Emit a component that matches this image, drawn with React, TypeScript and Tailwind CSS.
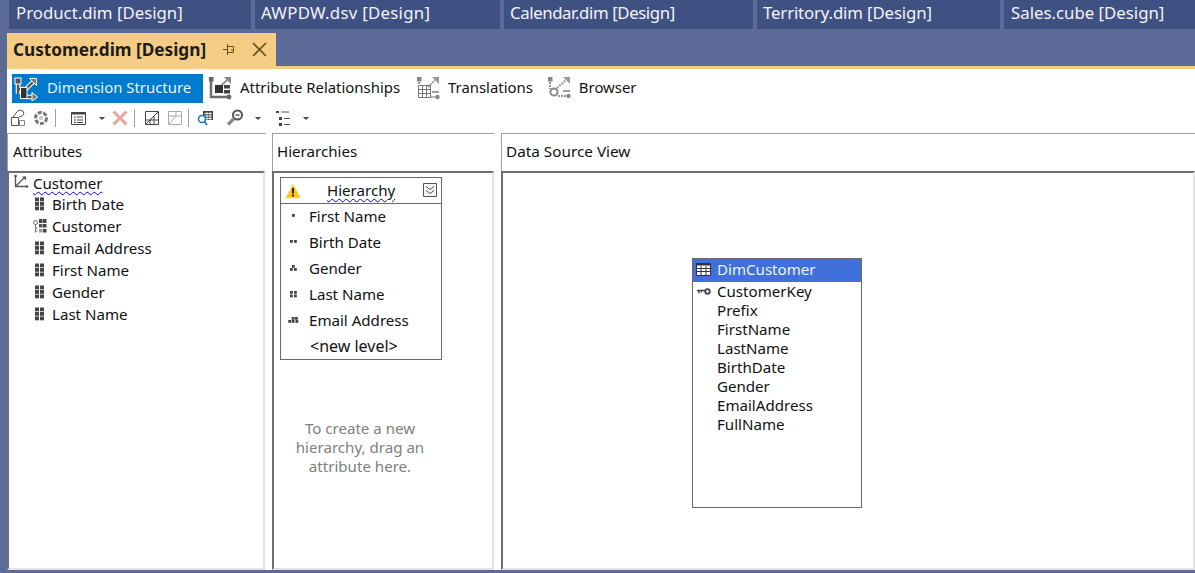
import React from 'react';

const OTHER_TABS = [
  { label: 'Product.dim [Design]', cls: 'w-[242px] pl-[7px]' },
  { label: 'AWPDW.dsv [Design]', cls: 'w-[245px] pl-[6px] tracking-[0.28px]' },
  { label: 'Calendar.dim [Design]', cls: 'w-[249px] pl-[6px] tracking-[-0.4px]' },
  { label: 'Territory.dim [Design]', cls: 'w-[243px] pl-[6px] tracking-[-0.14px]' },
  { label: 'Sales.cube [Design]', cls: 'w-[191px] pl-[7px]' },
];

const ATTRIBUTES = ['Birth Date', 'Customer', 'Email Address', 'First Name', 'Gender', 'Last Name'];
const COLUMNS = ['CustomerKey', 'Prefix', 'FirstName', 'LastName', 'BirthDate', 'Gender', 'EmailAddress', 'FullName'];

// Little square dots that get denser per hierarchy level
const LEVELS: { name: string; dots: [number, number][] }[] = [
  { name: 'First Name', dots: [[4, 3]] },
  { name: 'Birth Date', dots: [[2, 3], [6, 3]] },
  { name: 'Gender', dots: [[4, 2], [2, 5], [6, 5]] },
  { name: 'Last Name', dots: [[2, 2], [6, 2], [2, 5.5], [6, 5.5]] },
  { name: 'Email Address', dots: [[3.7, 2], [7, 2], [0.3, 5], [3.7, 5], [7.5, 5]] },
];

function DimensionIcon({ variant }: { variant: 'structure' | 'relations' | 'translations' | 'browser' }) {
  return (
    <svg width="24" height="24" viewBox="0 0 24 24" className="shrink-0">
      {variant === 'structure' && (
        <g>
          <path d="M4 3v14M4 12h6M11 13 21 3M12 20h10" stroke="#fff" strokeWidth="4.5" fill="none" />
          <path d="M4 3v14M4 12h6M11 13 21 3M12 20h10" stroke="#555" strokeWidth="2.4" fill="none" />
          <rect x="6.5" y="10.5" width="6.5" height="11" fill="#333" stroke="#fff" />
          <rect x="1" y="1" width="6" height="6" fill="#555" stroke="#fff" />
          <path d="M15.5 1.5h7v7z" fill="#777" stroke="#fff" />
          <path d="M18 15.5l5.5 4.5-5.5 4z" fill="#777" stroke="#fff" />
        </g>
      )}
      {variant === 'relations' && (
        <g>
          <path d="M3 3v18h18" stroke="#b0b0b0" strokeWidth="3" fill="none" />
          <path d="M3 3v18h18" stroke="#555" strokeWidth="1.4" fill="none" />
          <path d="M10 13 20 3" stroke="#999" strokeWidth="2.2" />
          <rect x="7" y="9" width="8" height="8" fill="#333" />
          <rect x="16" y="9" width="6" height="3.5" fill="#444" />
          <rect x="16" y="14" width="6" height="3.5" fill="#444" />
          <rect x="1" y="1" width="4.5" height="4.5" fill="#666" />
          <path d="M16 1h7v7z" fill="#888" />
          <circle cx="21" cy="21" r="2.4" fill="#666" />
        </g>
      )}
      {variant === 'translations' && (
        <g>
          <path d="M3 3v6M12 11 20 3" stroke="#999" strokeWidth="2" strokeDasharray="2 1" fill="none" />
          <rect x="1" y="1" width="4.5" height="4.5" fill="#888" />
          <path d="M16 1h7v7z" fill="#999" />
          <path d="M2.5 9.5h12v12h-12zM2.5 13.5h12M2.5 17.5h12M6.5 9.5v12M10.5 9.5v12" stroke="#777" fill="none" />
          <path d="M16 16h7" stroke="#888" strokeWidth="1.6" />
          <path d="M15 21h6" stroke="#aaa" strokeWidth="1.6" />
          <circle cx="21.5" cy="21" r="2.2" fill="#888" />
        </g>
      )}
      {variant === 'browser' && (
        <g>
          <path d="M3 3v10M10 12 20 3M11 20h10" stroke="#999" strokeWidth="2" strokeDasharray="2 1" fill="none" />
          <rect x="1" y="1" width="4.5" height="4.5" fill="#888" />
          <path d="M16 1h7v7z" fill="#999" />
          <circle cx="7" cy="16" r="3.6" fill="#fff" stroke="#888" strokeWidth="2" />
          <path d="M16 15h7" stroke="#888" strokeWidth="1.6" />
          <circle cx="21.5" cy="20" r="2.2" fill="#888" />
        </g>
      )}
    </svg>
  );
}

function AttributeIcon({ keyed }: { keyed: boolean }) {
  if (keyed) {
    return (
      <svg width="14" height="14" viewBox="0 0 14 14" className="shrink-0">
        <circle cx="2.5" cy="3.5" r="2" fill="none" stroke="#666" />
        <path d="M2.5 5.5v8M2.5 9h2M2.5 12h2" stroke="#777" />
        <rect x="6" y="0" width="3.5" height="4" fill="#444" />
        <rect x="10" y="0" width="3.5" height="4" fill="#444" />
        <rect x="6" y="5" width="3.5" height="3.5" fill="#555" />
        <rect x="10" y="5" width="3.5" height="3.5" fill="#444" />
        <rect x="6" y="10" width="3.5" height="3.5" fill="#999" />
        <rect x="10" y="10" width="3.5" height="3.5" fill="#444" />
      </svg>
    );
  }
  return (
    <svg width="14" height="14" viewBox="0 0 14 14" className="shrink-0">
      {[0.5, 5, 9.5].map((y) => (
        <g key={y}>
          <rect x="2" y={y} width="4" height="3.8" fill="#444" />
          <rect x="7" y={y} width="4" height="3.8" fill="#444" />
        </g>
      ))}
    </svg>
  );
}

function Caret({ className }: { className: string }) {
  return <div className={`w-0 h-0 border-x-[3px] border-x-transparent border-t-[3px] border-t-[#444] ${className}`} />;
}

function Separator({ className }: { className: string }) {
  return <div className={`w-px h-[18px] bg-[#a0a0a0] ${className}`} />;
}

function ToolIcons() {
  return (
    <div className="flex items-center h-[22px] pl-[4px]">
      {/* build / process */}
      <svg width="16" height="18" viewBox="0 0 16 18">
        <path d="M.5 8.5h7v8h-7zM2 8l3-4 3-3 4 1 1 3-2 2-3 1" fill="#fff" stroke="#555" />
        <path d="M8.5 11.5h5v5h-5z" fill="#fff" stroke="#888" />
      </svg>
      <svg width="16" height="16" viewBox="0 0 16 16" className="ml-[6px]">
        <circle cx="8" cy="8" r="5.5" fill="none" stroke="#777" strokeWidth="3" strokeDasharray="4 1.5" />
        <circle cx="8" cy="8" r="2.2" fill="#ccc" />
      </svg>
      <Separator className="ml-[6px]" />
      <svg width="15" height="13" viewBox="0 0 15 13" className="ml-[15px]">
        <path d="M.5.5h14v12H.5z" fill="#fff" stroke="#444" />
        <path d="M.5 1.5h14" stroke="#444" strokeWidth="2" />
        <path d="M3 5h2M6 5h6M3 8h2M6 8h6M3 10.5h2M6 10.5h6" stroke="#444" />
      </svg>
      <Caret className="ml-[13px]" />
      <svg width="16" height="16" viewBox="0 0 16 16" className="ml-[7px]">
        <path d="M1.5 1.5l13 13M14.5 1.5l-13 13" stroke="#e3a79e" strokeWidth="3" />
      </svg>
      <Separator className="ml-[6px]" />
      <svg width="14" height="14" viewBox="0 0 14 14" className="ml-[10px]">
        <path d="M.5.5h13v13H.5z" fill="#fff" stroke="#444" />
        <path d="M1 13 13 1M5 13V9M9 13V5M1 9h12M5 9 9 5" stroke="#444" />
      </svg>
      <svg width="14" height="14" viewBox="0 0 14 14" className="ml-[9px]">
        <path d="M.5.5h13v13H.5z" fill="#fff" stroke="#aaa" />
        <path d="M1 5h12M8 1v4M1 13 8 5" stroke="#aaa" />
      </svg>
      <Separator className="ml-[6px]" />
      <svg width="16" height="16" viewBox="0 0 16 16" className="ml-[8px]">
        <path d="M6 1h10v9H6z" fill="#444" />
        <path d="M7 3.5h8M7 6h8M7 8.5h8M10 2v8M13 2v8" stroke="#fff" strokeWidth=".8" />
        <circle cx="5" cy="9" r="3.5" fill="#fff" stroke="#1e79c8" strokeWidth="1.6" />
        <path d="M7.5 11.5 10 15" stroke="#1e79c8" strokeWidth="1.8" />
      </svg>
      <svg width="18" height="18" viewBox="0 0 18 18" className="ml-[13px]">
        <circle cx="11.5" cy="6" r="4.5" fill="#fff" stroke="#555" strokeWidth="2" />
        <path d="M9.5 6h4" stroke="#555" strokeWidth="1.4" />
        <path d="M8 9.5 2 15.5" stroke="#888" strokeWidth="3.4" />
      </svg>
      <Caret className="ml-[11px]" />
      <svg width="15" height="16" viewBox="0 0 15 16" className="ml-[14px]">
        <path d="M1 1h3v2H1zM4 7h3v3H4zM4 13h3v3H4z" fill="#444" />
        <path d="M6 2h8M9 8.5h6M9 14.5h6" stroke="#555" />
      </svg>
      <Caret className="ml-[13px]" />
    </div>
  );
}

function Panel({ title, className, titleClass, children }: { title: string; className: string; titleClass: string; children: React.ReactNode }) {
  return (
    <section className={`flex flex-col ${className}`}>
      <h2 className={`h-[38px] shrink-0 border-t border-l border-[#a0a0a0] pt-[7px] font-normal leading-[20px] ${titleClass}`}>{title}</h2>
      <div className="relative flex-1 min-h-0 border-t-2 border-l-2 border-[#6e6e6e] border-r-2 border-r-[#e3e3e3] border-b-2 border-b-[#e3e3e3] bg-white">
        {children}
      </div>
    </section>
  );
}

export default function App() {
  return (
    <div
      className="w-[1195px] h-[573px] overflow-hidden bg-[#5c6a97] text-[15.1px] text-[#111] flex flex-col"
      style={{ fontFamily: '"Noto Sans", "Open Sans", sans-serif' }}
    >
      {/* Hidden tabs row */}
      <div className="h-[29px] shrink-0 flex pl-[9px] gap-[4px] overflow-hidden">
        {OTHER_TABS.map((tab) => (
          <div key={tab.label} className={`${tab.cls} shrink-0 bg-[#3f5083] text-[#f2f4f8] text-[16.8px] leading-[26px] whitespace-nowrap`}>
            {tab.label}
          </div>
        ))}
      </div>

      {/* Active tab */}
      <div className="h-[33px] shrink-0 mt-[4px] pl-[7px] flex">
        <div className="w-[269px] bg-[#f5cc84] flex items-center pl-[6px] text-[#1c1c1c]">
          <span className="font-bold text-[17.2px] whitespace-nowrap">Customer.dim [Design]</span>
          <svg width="13" height="11" viewBox="0 0 13 11" className="ml-[17px] shrink-0">
            <path d="M0 5.5h5M4.5 2.5h6v6h-6zM4.5 0v11M8 6h2.5" stroke="#6b4e1e" fill="none" />
          </svg>
          <svg width="15" height="15" viewBox="0 0 15 15" className="ml-[16px] shrink-0">
            <path d="M1 1l13 13M14 1 1 14" stroke="#6b4e1e" strokeWidth="1.6" />
          </svg>
        </div>
      </div>

      {/* Designer */}
      <div className="ml-[7px] h-[504px] shrink-0 border-t-[3px] border-[#f5cc84] bg-white flex flex-col">
        <nav className="h-[29px] mt-[5px] shrink-0 flex items-center pl-[5px] whitespace-nowrap text-[14.9px]">
          <div className="w-[191px] h-[29px] bg-[#007acc] text-[#eaf5fc] flex items-center pl-[2px] gap-[9px]">
            <DimensionIcon variant="structure" />
            <span className="pb-[2px]">Dimension Structure</span>
          </div>
          <div className="flex items-center ml-[5px] gap-[8px]">
            <DimensionIcon variant="relations" />
            <span className="pb-[2px]">Attribute Relationships</span>
          </div>
          <div className="flex items-center ml-[16px] gap-[8px]">
            <DimensionIcon variant="translations" />
            <span className="pb-[2px]">Translations</span>
          </div>
          <div className="flex items-center ml-[14px] gap-[8px]">
            <DimensionIcon variant="browser" />
            <span className="pb-[2px]">Browser</span>
          </div>
        </nav>
        <div className="mt-[4px] shrink-0">
          <ToolIcons />
        </div>

        <div className="mt-[4px] flex-1 min-h-0 flex">
          <Panel title="Attributes" className="w-[258px]" titleClass="pl-[5px] text-[14.8px]">
            <div className="pl-[4px] leading-[22px]">
              <div className="flex items-center h-[20px]">
                <svg width="16" height="16" viewBox="0 0 16 16" className="shrink-0 mb-[2px]">
                  <path d="M2.5 2v10.5H14M3 12 12 3" stroke="#555" strokeWidth="1.3" fill="none" />
                  <path d="M9 2.5h4V6.5z" fill="#555" />
                  <circle cx="2.5" cy="2" r="1.3" fill="#555" />
                  <circle cx="14" cy="12.5" r="1.3" fill="#555" />
                </svg>
                <span className="ml-[4px] mb-[1px] leading-[20px] underline decoration-wavy decoration-[#0000ff] decoration-1 underline-offset-2">Customer</span>
              </div>
              {ATTRIBUTES.map((name) => (
                <div key={name} className="flex items-center h-[22px] pl-[20px] gap-[5px]">
                  <AttributeIcon keyed={name === 'Customer'} />
                  <span>{name}</span>
                </div>
              ))}
            </div>
          </Panel>

          <Panel title="Hierarchies" className="w-[222px] ml-[7px]" titleClass="pl-[4px]">
            <div className="ml-[6px] mt-[4px] w-[162px] h-[183px] border border-[#6a6a6a] flex flex-col">
              <div className="h-[26px] shrink-0 border-b border-[#6a6a6a] flex items-center relative">
                <svg width="16" height="16" viewBox="0 0 16 16" className="ml-[4px] shrink-0">
                  <path d="M8 .8 15.5 15H.5z" fill="#ffc800" stroke="#efe3b4" />
                  <path d="M8 5v5.5M8 11.5v2" stroke="#111" strokeWidth="1.8" />
                </svg>
                <span className="ml-[26px] underline decoration-wavy decoration-[#0000ff] decoration-1 underline-offset-2">Hierarchy</span>
                <svg width="14" height="14" viewBox="0 0 14 14" className="absolute right-[4px] top-[5px]">
                  <path d="M.5.5h13v13H.5z" fill="#f6f6f6" stroke="#555" />
                  <path d="M3 3.5l4 3 4-3M3 7.5l4 3 4-3" stroke="#555" fill="none" />
                </svg>
              </div>
              {LEVELS.map((level) => (
                <div key={level.name} className="h-[26px] shrink-0 flex items-center pl-[7px]">
                  <svg width="14" height="12" viewBox="0 0 14 12" className="shrink-0">
                    {level.dots.map(([x, y], i) => (
                      <rect key={i} x={x} y={y} width="2.8" height="2.8" fill="#444" />
                    ))}
                  </svg>
                  <span className="ml-[7px] pb-[2px]">{level.name}</span>
                </div>
              ))}
              <div className="h-[26px] shrink-0 flex items-center pl-[29px] pb-[2px] text-[16px]">&lt;new level&gt;</div>
            </div>
            <p className="mt-[59px] w-[160px] ml-[6px] text-center leading-[19px] text-[#808080]">
              To create a new hierarchy, drag an attribute here.
            </p>
          </Panel>

          <Panel title="Data Source View" className="flex-1 ml-[7px]" titleClass="pl-[4px] text-[15.3px]">
            {/* Table node sits at its own place on the diagram canvas */}
            <div className="absolute left-[189px] top-[85px] w-[170px] h-[250px] border border-[#6a6a6a] bg-white">
              <div className="h-[23px] bg-[#4070dc] text-[#eef3ff] flex items-center pl-[3px] pb-[2px]">
                <svg width="15" height="13" viewBox="0 0 15 13" className="shrink-0">
                  <path d="M.5.5h14v12H.5z" fill="#fff" stroke="#333" />
                  <path d="M.5 1.5h14" stroke="#333" strokeWidth="2" />
                  <path d="M.5 5.5h14M.5 8.5h14M5 3v9M10 3v9" stroke="#333" />
                </svg>
                <span className="ml-[6px]">DimCustomer</span>
              </div>
              <ul>
                {COLUMNS.map((col) => (
                  <li key={col} className="h-[19px] leading-[19px] pl-[24px] relative">
                    {col === 'CustomerKey' && (
                      <svg width="14" height="7" viewBox="0 0 14 7" className="absolute left-[4px] top-[6px]">
                        <circle cx="10.5" cy="3.5" r="2.3" fill="none" stroke="#444" strokeWidth="1.8" />
                        <path d="M0 2.5h8M2 2.5v3M4.5 2.5v2" stroke="#444" strokeWidth="1.4" />
                      </svg>
                    )}
                    {col}
                  </li>
                ))}
              </ul>
            </div>
          </Panel>
        </div>
      </div>
    </div>
  );
}
